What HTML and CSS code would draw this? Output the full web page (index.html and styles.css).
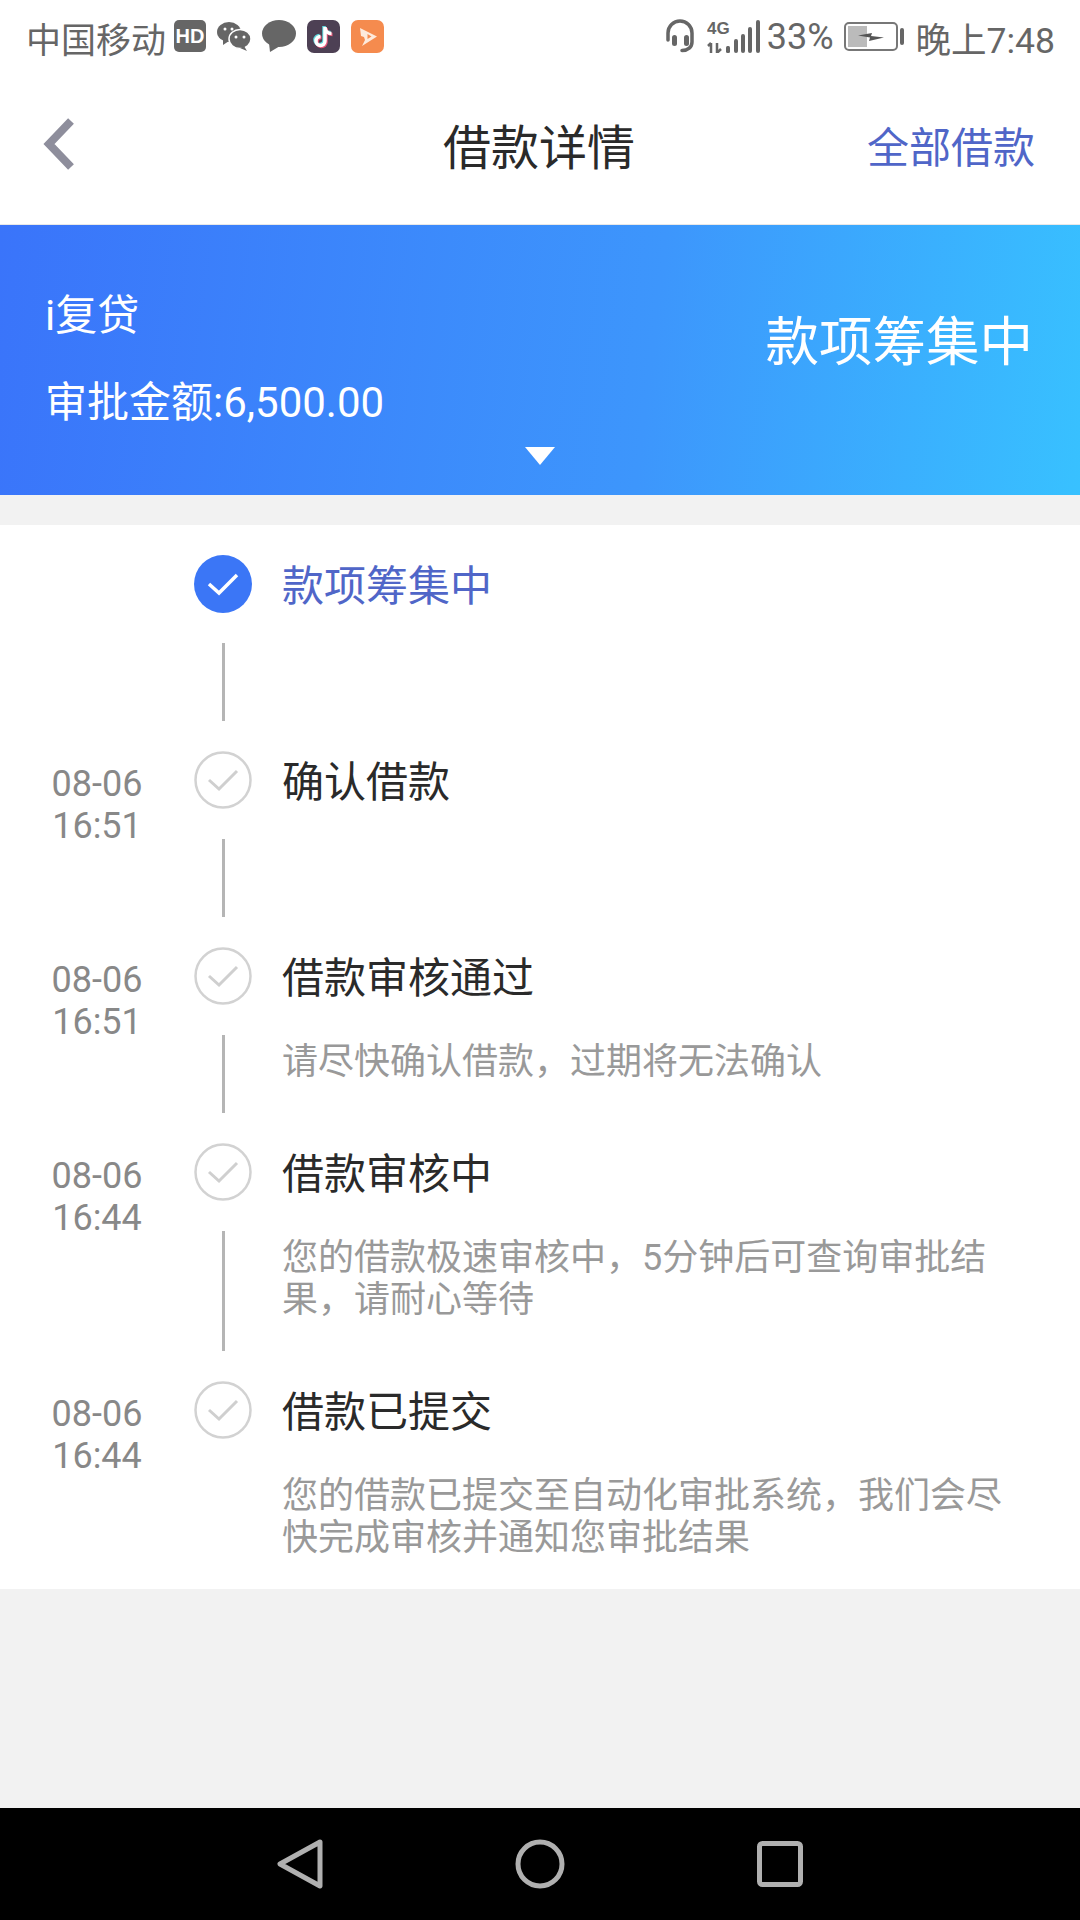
FILE: index.html
```html
<!DOCTYPE html>
<html lang="zh-CN">
<head>
    <meta charset="UTF-8">
    <meta name="viewport" content="width=device-width, initial-scale=1.0">
    <title>借款详情</title>
    <link rel="stylesheet" href="styles.css">
</head>
<body>
    <div class="status-bar">
        <div class="status-left">
            <span class="carrier">中国移动</span>
            <svg class="ic-hd" width="32" height="32" viewBox="0 0 32 32">
                <rect width="32" height="32" rx="5" fill="#666"/>
                <text x="16" y="23" text-anchor="middle" class="hd-text">HD</text>
            </svg>
            <svg class="ic-wechat" width="34" height="30" viewBox="0 0 34 30">
                <ellipse cx="12" cy="11" rx="12" ry="10" fill="#666"/>
                <path d="M6 18l0 6 6-4z" fill="#666"/>
                <ellipse cx="23" cy="18" rx="11" ry="9.500" fill="#666" stroke="#fff" stroke-width="1.500"/>
                <path d="M27 25l3 5-7-3z" fill="#666"/>
                <circle cx="8" cy="8" r="1.500" fill="#fff"/>
                <circle cx="15" cy="8" r="1.500" fill="#fff"/>
                <circle cx="19" cy="16" r="1.500" fill="#fff"/>
                <circle cx="27" cy="16" r="1.500" fill="#fff"/>
            </svg>
            <svg class="ic-bubble" width="34" height="32" viewBox="0 0 34 32">
                <ellipse cx="17" cy="13.500" rx="17" ry="13.500" fill="#666"/>
                <path d="M7 23l1 9 10-6z" fill="#666"/>
            </svg>
            <svg class="ic-tiktok" width="33" height="33" viewBox="0 0 33 33">
                <rect width="33" height="33" rx="7" fill="#4d4054"/>
                <path d="M18 7v14a4.500 4.500 0 1 1-4.500-4.500M18 7c0 4 3 6.500 6.500 6.500" fill="none" stroke="#5fd6dc" stroke-width="3.500" transform="translate(-1 -1)"/>
                <path d="M18 7v14a4.500 4.500 0 1 1-4.500-4.500M18 7c0 4 3 6.500 6.500 6.500" fill="none" stroke="#e8587a" stroke-width="3.500" transform="translate(1 1)"/>
                <path d="M18 7v14a4.500 4.500 0 1 1-4.500-4.500M18 7c0 4 3 6.500 6.500 6.500" fill="none" stroke="#fff" stroke-width="3.500"/>
            </svg>
            <svg class="ic-video" width="33" height="33" viewBox="0 0 33 33">
                <rect width="33" height="33" rx="7" fill="#f58b4e"/>
                <path d="M9 8l17 8.500-15 9.500 3-6-1-3-3-1z" fill="#fdeadc"/>
                <path d="M16.500 14l4 2.500-4 2.500z" fill="#f58b4e"/>
            </svg>
        </div>
        <div class="status-right">
            <svg class="ic-headset" width="30" height="34" viewBox="0 0 30 34">
                <path d="M3 21v-7a12 12 0 0 1 24 0v9c0 5-4 8.500-10 8.500" fill="none" stroke="#666" stroke-width="3.500" stroke-linecap="round"/>
                <rect x="7" y="16" width="5" height="11" rx="2.500" fill="#666"/>
                <rect x="19" y="16" width="5" height="11" rx="2.500" fill="#666"/>
            </svg>
            <svg class="ic-signal" width="54" height="33" viewBox="0 0 54 33">
                <text x="0" y="14" class="net-text">4G</text>
                <path d="M4 23v10M1 26l3-3M10 23v10M10 33l4-4" fill="none" stroke="#666" stroke-width="2.500"/>
                <rect x="19" y="26" width="4" height="7" rx="1.500" fill="#666"/>
                <rect x="27" y="19" width="4" height="14" rx="2" fill="#666"/>
                <rect x="34" y="14" width="4" height="19" rx="2" fill="#666"/>
                <rect x="41" y="7" width="4" height="26" rx="2" fill="#666"/>
                <rect x="49" y="0" width="4" height="33" rx="2" fill="#666"/>
            </svg>
            <span class="battery-pct">33%</span>
            <svg class="ic-battery" width="61" height="29" viewBox="0 0 61 29">
                <rect x="1" y="1" width="52" height="27" rx="4" fill="none" stroke="#777" stroke-width="2"/>
                <rect x="4" y="4" width="19" height="21" fill="#bbb"/>
                <path d="M14 13.500l14-2.500-1 3 13 1.500-15 3.500 1-3.500z" fill="#555"/>
                <rect x="56" y="6" width="4" height="17" rx="2" fill="#666"/>
            </svg>
            <span class="clock">晚上7:48</span>
        </div>
    </div>

    <div class="top-nav">
        <svg class="ic-back" width="32" height="52" viewBox="0 0 32 52">
            <path d="M28 3L6 26l22 23" fill="none" stroke="#8e8e9c" stroke-width="8"/>
        </svg>
        <div class="page-title">借款详情</div>
        <div class="nav-link">全部借款</div>
    </div>

    <div class="banner">
        <div class="banner-info">
            <div class="product">i复贷</div>
            <div class="amount">审批金额:6,500.00</div>
        </div>
        <div class="banner-status">款项筹集中</div>
        <span class="banner-arrow"></span>
    </div>

    <div class="timeline">
        <div class="step">
            <div class="time"></div>
            <div class="axis">
                <svg class="dot" width="58" height="58" viewBox="0 0 58 58">
                    <circle cx="29" cy="29" r="29" fill="#3b76f6"/>
                    <path d="M15 29l10 9 18-18" fill="none" stroke="#fff" stroke-width="3.500"/>
                </svg>
                <div class="line"></div>
            </div>
            <div class="body">
                <div class="step-title current">款项筹集中</div>
            </div>
        </div>

        <div class="step">
            <div class="time">08-06<br>16:51</div>
            <div class="axis">
                <svg class="dot" width="58" height="58" viewBox="0 0 58 58">
                    <circle cx="29" cy="29" r="27.500" fill="#fff" stroke="#d2d2d2" stroke-width="2.500"/>
                    <path d="M15 29l10 9 18-18" fill="none" stroke="#cfcfcf" stroke-width="3"/>
                </svg>
                <div class="line"></div>
            </div>
            <div class="body">
                <div class="step-title">确认借款</div>
            </div>
        </div>

        <div class="step">
            <div class="time">08-06<br>16:51</div>
            <div class="axis">
                <svg class="dot" width="58" height="58" viewBox="0 0 58 58">
                    <circle cx="29" cy="29" r="27.500" fill="#fff" stroke="#d2d2d2" stroke-width="2.500"/>
                    <path d="M15 29l10 9 18-18" fill="none" stroke="#cfcfcf" stroke-width="3"/>
                </svg>
                <div class="line"></div>
            </div>
            <div class="body">
                <div class="step-title">借款审核通过</div>
                <div class="step-desc">请尽快确认借款，过期将无法确认</div>
            </div>
        </div>

        <div class="step">
            <div class="time">08-06<br>16:44</div>
            <div class="axis">
                <svg class="dot" width="58" height="58" viewBox="0 0 58 58">
                    <circle cx="29" cy="29" r="27.500" fill="#fff" stroke="#d2d2d2" stroke-width="2.500"/>
                    <path d="M15 29l10 9 18-18" fill="none" stroke="#cfcfcf" stroke-width="3"/>
                </svg>
                <div class="line"></div>
            </div>
            <div class="body">
                <div class="step-title">借款审核中</div>
                <div class="step-desc">您的借款极速审核中，5分钟后可查询审批结果，请耐心等待</div>
            </div>
        </div>

        <div class="step">
            <div class="time">08-06<br>16:44</div>
            <div class="axis">
                <svg class="dot" width="58" height="58" viewBox="0 0 58 58">
                    <circle cx="29" cy="29" r="27.500" fill="#fff" stroke="#d2d2d2" stroke-width="2.500"/>
                    <path d="M15 29l10 9 18-18" fill="none" stroke="#cfcfcf" stroke-width="3"/>
                </svg>
            </div>
            <div class="body">
                <div class="step-title">借款已提交</div>
                <div class="step-desc">您的借款已提交至自动化审批系统，我们会尽快完成审核并通知您审批结果</div>
            </div>
        </div>
    </div>

    <div class="spacer"></div>

    <div class="system-nav">
        <svg width="50" height="54" viewBox="0 0 50 54">
            <path d="M45 5L5 27l40 22z" fill="none" stroke="#b0b0b0" stroke-width="5" stroke-linejoin="round"/>
        </svg>
        <svg width="50" height="50" viewBox="0 0 50 50">
            <circle cx="25" cy="25" r="22" fill="none" stroke="#b0b0b0" stroke-width="5"/>
        </svg>
        <svg width="50" height="50" viewBox="0 0 50 50">
            <rect x="4.500" y="4.500" width="41" height="41" rx="3" fill="none" stroke="#b0b0b0" stroke-width="5"/>
        </svg>
    </div>
</body>
</html>
```

FILE: styles.css
```css
* {
    box-sizing: border-box;
}

body {
    margin: 0;
    width: 1080px;
    height: 1920px;
    display: flex;
    flex-direction: column;
    font-family: Roboto, "Noto Sans CJK SC", sans-serif;
    background-color: #f2f2f2;
    overflow: hidden;
}

svg {
    display: block;
    flex: none;
}

.status-bar {
    height: 72px;
    padding: 0 25px 0 26px;
    display: flex;
    justify-content: space-between;
    align-items: center;
    background-color: #fff;
    color: #666;
    font-size: 35px;
}

.status-left,
.status-right {
    display: flex;
    align-items: center;
}

.status-left svg {
    margin-left: 11px;
}

.status-left .ic-hd {
    margin-left: 8px;
}

.carrier,
.battery-pct,
.clock {
    padding-top: 2px;
}

.hd-text {
    font: 700 20px "Liberation Sans", sans-serif;
    fill: #fff;
}

.net-text {
    font: 700 17px "Liberation Sans", sans-serif;
    fill: #666;
}

.ic-signal {
    margin-left: 12px;
}

.battery-pct {
    margin-left: 6px;
    font-size: 36px;
}

.ic-battery {
    margin-left: 10px;
}

.clock {
    margin-left: 11px;
    font-size: 35.500px;
}

.top-nav {
    height: 153px;
    padding: 0 45px 8px 43px;
    display: grid;
    grid-template-columns: 1fr auto 1fr;
    align-items: center;
    background-color: #fff;
    border-bottom: 1px solid #e8e8e8;
}

.page-title {
    font-size: 48px;
    color: #2a2a2a;
}

.nav-link {
    font-size: 42px;
    color: #5066c8;
    text-align: right;
}

.banner {
    position: relative;
    height: 270px;
    padding: 0 47px 0 45px;
    display: flex;
    justify-content: space-between;
    align-items: center;
    background: linear-gradient(97deg, #3a74fa 0%, #3d96fc 60%, #38c1ff 100%);
    color: #fff;
}

.banner-info {
    padding-bottom: 1px;
}

.product {
    font-size: 42px;
    line-height: 50px;
}

.amount {
    margin-top: 37px;
    font-size: 42px;
    line-height: 50px;
}

.banner-status {
    margin-bottom: 46px;
    font-size: 53.500px;
}

.banner-arrow {
    position: absolute;
    left: 525px;
    top: 222px;
    width: 0;
    height: 0;
    border-left: 15px solid transparent;
    border-right: 15px solid transparent;
    border-top: 18px solid #fff;
}

.timeline {
    margin-top: 30px;
    padding-top: 30px;
    background-color: #fff;
}

.step {
    display: grid;
    grid-template-columns: 194px 58px 1fr;
    min-height: 196px;
}

.time {
    padding-top: 12px;
    font-size: 36px;
    line-height: 42px;
    color: #888;
    text-align: center;
}

.axis {
    display: flex;
    flex-direction: column;
    align-items: center;
}

.line {
    flex: 1;
    width: 3px;
    margin: 30px 0;
    background-color: #b5b5b5;
}

.body {
    padding: 0 67px 60px 30px;
}

.step:last-child {
    min-height: 0;
}

.step:last-child .body {
    padding-bottom: 30px;
}

.step-title {
    padding-top: 3px;
    font-size: 42px;
    line-height: 58px;
    color: #2a2a2a;
}

.step-title.current {
    color: #5066c8;
}

.step-desc {
    margin-top: 33px;
    font-size: 36px;
    line-height: 42px;
    color: #999;
}

.spacer {
    flex: 1;
}

.system-nav {
    height: 112px;
    display: flex;
    justify-content: center;
    align-items: center;
    gap: 190px;
    background-color: #000;
}
```
